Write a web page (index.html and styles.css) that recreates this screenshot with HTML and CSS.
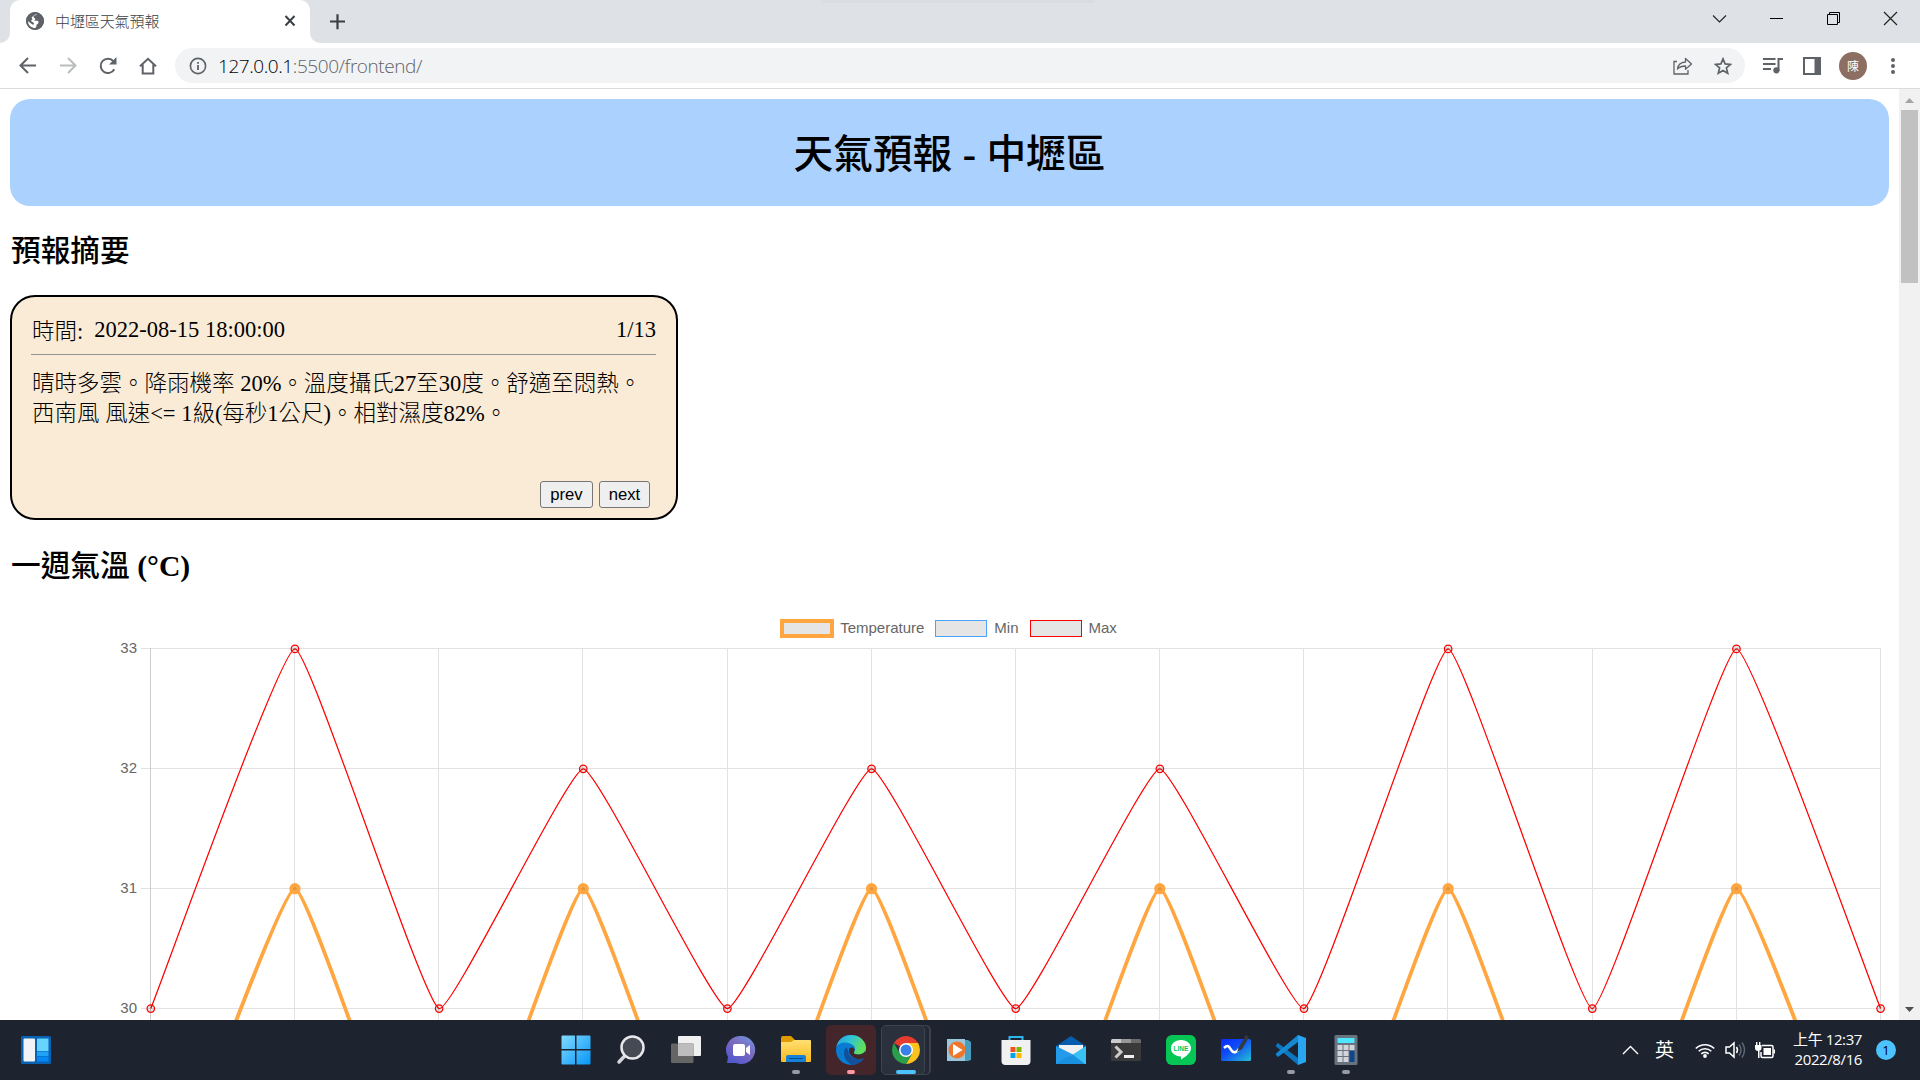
FILE: index.html
```html
<!DOCTYPE html>
<html lang="zh-Hant">
<head>
<meta charset="utf-8">
<title>中壢區天氣預報</title>
<link rel="stylesheet" href="styles.css">
</head>
<body>
<div class="desktop">
  <div class="tabstrip">
    <div class="strip-left"></div>
    <div class="tab">
      <svg class="favicon" width="18" height="18" viewBox="0 0 24 24"><circle cx="12" cy="12" r="12" fill="#5f6368"/><path d="M14.500 2.500c-1 2.500-4.500 1.500-4.500 4 0 1.500 2.500 1 2.500 3 0 1.800-2.500 2-2.500 2h5c1.500 0 2 2 1.500 3-.8 1.500-2.500 1.500-2.500 3 0 1-.5 2.500-2 4.200C5 21.500 2.200 17 2.300 12l6.200 4.500c2 1 3-1 1.500-2.200L6.500 11.500l2-1.500-1-3 6-4.500z" fill="#fff"/><path d="M15 2.700c4 1.300 6.600 5 6.700 9.300-1.500-.5-3.500.5-4.700-.5-1.500-1.200-3.500-.5-4.500-2 1-1.500.5-2.500 2-3.500z" fill="#5f6368"/><circle cx="12" cy="12" r="10.700" fill="none" stroke="#5f6368" stroke-width="2.400"/></svg>
      <span class="tab-title">中壢區天氣預報</span>
      <svg class="tab-close" width="12" height="12" viewBox="0 0 12 12"><path d="M1.500 1l9 9.500M10.500 1l-9 9.500" stroke="#3c4043" stroke-width="2"/></svg>
    </div>
    <div class="strip-rest">
      <svg class="plus" width="16" height="16" viewBox="0 0 16 16"><path d="M7.500 .2v15M0 7.500h15" stroke="#3c4043" stroke-width="2.200"/></svg>
      <div class="top-shadow"></div>
      <div class="win-buttons">
        <svg width="15" height="15" viewBox="0 0 15 15"><path d="M1 4.500l6.500 6.500L14 4.500" fill="none" stroke="#222" stroke-width="1.100"/></svg>
        <svg width="15" height="15" viewBox="0 0 15 15"><path d="M1 7.500h13" stroke="#000"/></svg>
        <svg width="15" height="15" viewBox="0 0 15 15"><path d="M1.500 3.500h10v10h-10zM3.500 3.500v-2h10v10h-2" fill="none" stroke="#000"/></svg>
        <svg width="15" height="15" viewBox="0 0 15 15"><path d="M1 1l13 13M14 1L1 14" stroke="#222" stroke-width="1.200"/></svg>
      </div>
    </div>
  </div>

  <div class="toolbar">
    <div class="nav">
      <svg width="18" height="18" viewBox="0 0 18 18"><path d="M17 8.500H2M9 1L1.500 8.500 9 16" fill="none" stroke="#5f6368" stroke-width="2"/></svg>
      <svg width="18" height="18" viewBox="0 0 18 18"><path d="M1 8.500h15M9 1L16.500 8.500 9 16" fill="none" stroke="#babcbe" stroke-width="2"/></svg>
      <svg width="18" height="18" viewBox="0 0 18 18"><path d="M15.300 12.200A7.200 7.200 0 1 1 14.500 4.300" fill="none" stroke="#5f6368" stroke-width="2"/><path d="M17.500 0v7.500H10z" fill="#5f6368"/></svg>
      <svg width="18" height="18" viewBox="0 0 18 18"><path d="M1 9.300L9 1.800l8 7.500M3.700 7.500v9h10.600v-9" fill="none" stroke="#5f6368" stroke-width="2"/></svg>
    </div>
    <div class="omnibox">
      <svg width="18" height="18" viewBox="0 0 18 18"><circle cx="9" cy="9" r="7.600" fill="none" stroke="#5f6368" stroke-width="1.600"/><path d="M9 8v5M9 5v1.800" stroke="#5f6368" stroke-width="1.800"/></svg>
      <span class="url">127.0.0.1<span class="path">:5500/frontend/</span></span>
      <svg width="20" height="18" viewBox="0 0 20 18"><path d="M4 4.500H1V17h14v-4" fill="none" stroke="#5f6368" stroke-width="1.300"/><path d="M4.500 12c.5-4.300 3.200-6.700 8-7V1.500l6 5.500-6 5.300V9c-3.500 0-6 .8-8 3z" fill="none" stroke="#5f6368" stroke-width="1.300" stroke-linejoin="round"/></svg>
      <svg width="18" height="18" viewBox="0 0 18 18"><path d="M9 1.900l2.100 5 5.400.5-4.100 3.500 1.300 5.300L9 13.400l-4.700 2.800 1.300-5.300L1.500 7.400l5.400-.5z" fill="none" stroke="#5f6368" stroke-width="1.700"/></svg>
    </div>
    <div class="tools">
      <svg width="20" height="18" viewBox="0 0 20 18"><path d="M0 2h12.500M0 7h12.500M0 12h8" stroke="#5f6368" stroke-width="2"/><path d="M15.500 14V2H20" fill="none" stroke="#5f6368" stroke-width="2"/><circle cx="13.400" cy="13.300" r="3.100" fill="#5f6368"/></svg>
      <svg width="18" height="18" viewBox="0 0 18 18"><path d="M1 1h16v16H1z" fill="none" stroke="#5f6368" stroke-width="2"/><path d="M11.500 1H17v16h-5.500z" fill="#5f6368"/></svg>
      <span class="avatar">陳</span>
      <svg width="4" height="18" viewBox="0 0 4 18"><circle cx="2" cy="3" r="2" fill="#5f6368"/><circle cx="2" cy="9" r="2" fill="#5f6368"/><circle cx="2" cy="15" r="2" fill="#5f6368"/></svg>
    </div>
  </div>

  <div class="viewport">
    <main class="page">
      <header class="banner"><h1>天氣預報 <b>-</b> 中壢區</h1></header>
      <h2 class="summary-title">預報摘要</h2>
      <section class="card">
        <div class="card-head"><span class="label">時間:</span><span>2022-08-15 18:00:00</span><span class="count">1/13</span></div>
        <p class="desc">晴時多雲。降雨機率 20%。溫度攝氏27至30度。舒適至悶熱。<br>西南風 風速&lt;= 1級(每秒1公尺)。相對濕度82%。</p>
        <div class="pager"><button>prev</button><button>next</button></div>
      </section>
      <h2 class="week-title">一週氣溫 <b>(°C)</b></h2>
      <div class="legend">
        <span class="item"><i class="box temp"></i>Temperature</span>
        <span class="item"><i class="box min"></i>Min</span>
        <span class="item"><i class="box max"></i>Max</span>
      </div>
      <svg class="chart" id="chart" width="1899" height="384" viewBox="0 636 1899 384"></svg>
    </main>
    <div class="scrollbar">
      <svg width="19" height="21" viewBox="0 0 19 21"><path d="M5 14l4.500-5 4.500 5z" fill="#a3a3a3"/></svg>
      <div class="thumb"></div>
      <svg class="down" width="19" height="21" viewBox="0 0 19 21"><path d="M5 8h9l-4.500 5z" fill="#505050"/></svg>
    </div>
  </div>

  <footer class="taskbar">
    <svg class="widgets" width="30" height="28" viewBox="0 0 30 28"><rect width="30" height="28" rx="1.500" fill="#0a62b4"/><rect x="2.500" y="2.500" width="11.500" height="23" rx="1" fill="#f2f3f5"/><path d="M16 2.500h11.500V15H16z" fill="#66d4fc"/><path d="M16 15.500h11.500v4.500H16z" fill="#1fa3f5"/><path d="M16 20.500h11.500v5H16z" fill="#0787f2"/></svg>
    <div class="apps">
      <div class="app"><svg width="30" height="30" viewBox="0 0 30 30"><defs><linearGradient id="win" gradientUnits="userSpaceOnUse" x2="30" y2="30"><stop stop-color="#84dcff"/><stop offset="1" stop-color="#0494f6"/></linearGradient></defs><path d="M.5 1.500q0-1 1-1H14V14H.5zM15.500.5h13q1 0 1 1V14h-14zM.5 15.500H14v14H1.500q-1 0-1-1zM15.500 15.500h14v13q0 1-1 1h-13z" fill="url(#win)"/></svg></div>
      <div class="app"><svg width="30" height="30" viewBox="0 0 30 30"><path d="M10.500 19L3 27" stroke="#d4d6d8" stroke-width="3.500" stroke-linecap="round"/><circle cx="16.500" cy="12.500" r="11" fill="#454b54" stroke="#e8e9ea" stroke-width="2.500"/></svg></div>
      <div class="app"><svg width="30" height="30" viewBox="0 0 30 30"><rect x="7" y="1" width="23" height="20" rx="1" fill="#f0f0f0"/><rect y="8.500" width="22.500" height="19.500" rx="1" fill="#656565"/><path d="M7 8.500h15.500V21H7z" fill="#bdbdbd"/></svg></div>
      <div class="app"><svg width="30" height="30" viewBox="0 0 30 30"><defs><linearGradient id="chat" x1="1" x2=".3" y2="1"><stop stop-color="#6f9be8"/><stop offset=".5" stop-color="#7d69bd"/><stop offset="1" stop-color="#5258cf"/></linearGradient></defs><path d="M15 1a14 14 0 1 1-5 27H1l1-6A14 14 0 0 1 15 1z" fill="url(#chat)"/><rect x="7" y="9" width="12" height="12" rx="2" fill="#fff"/><path d="M20 13l4-3v10l-4-3z" fill="#fff"/></svg></div>
      <div class="app run"><svg width="30" height="30" viewBox="0 0 30 30"><defs><linearGradient id="fold" x2="0" y2="1"><stop stop-color="#ffdf72"/><stop offset="1" stop-color="#fdba1c"/></linearGradient></defs><path d="M0 3q0-2 2-2h8l4 4-3 3H0z" fill="#e09b00"/><path d="M0 7h10l3-2h16q1 0 1 1v20q0 1-1 1H1q-1 0-1-1z" fill="url(#fold)"/><path d="M5 27v-5q0-2 2-2h16q2 0 2 2v5z" fill="#1681d7"/><path d="M8 23.500h14" stroke="#075092"/></svg></div>
      <div class="app run edge"><svg width="30" height="30" viewBox="0 0 30 30"><defs><linearGradient id="eg" x2="1" y2=".4"><stop stop-color="#259fe2"/><stop offset=".5" stop-color="#31c4d5"/><stop offset="1" stop-color="#61df58"/></linearGradient></defs><circle cx="15" cy="15" r="15" fill="#087bd2"/><path d="M10 12c-4 6-2 14 6 18 5 0 10-3 12.500-7C23 26 12 24 12 15z" fill="#12509a"/><path d="M.3 12C2 4 8 0 15 0c9 0 15 6.500 15 12.500 0 4.500-3.500 7-7.500 7-3.500 0-5.500-1.200-4.500-2.500 2.500-3.500.5-7-4-8.500C8 6.500 2.500 8 .3 12z" fill="url(#eg)"/><path d="M18 17c-1 1.500 1 2.500 4.500 2.500 3 0 5.500-1.300 6.700-3.500L30 19l-1.500 4c-3 1.500-8 1.500-11-.5-4-2.500-5.500-6-4-9 2-2.500 6.500-.5 4.500 3.500z" fill="#442529"/></svg></div>
      <div class="app run chrome"><svg width="28" height="28" viewBox="0 0 28 28"><path d="M14 14L1.900 7A14 14 0 0 1 26.100 7z" fill="#e63c30"/><path d="M14 14V7h12.100A14 14 0 0 1 14 28l6-10z" fill="#fcc31e"/><path d="M1.900 7l6 10.500L14 21l6-3.500L14 28A14 14 0 0 1 1.900 7z" fill="#299e4b"/><circle cx="14" cy="14" r="7" fill="#fff"/><circle cx="14" cy="14" r="5.500" fill="#3880ea"/></svg></div>
      <div class="app player"><svg width="28" height="28" viewBox="0 0 28 28"><path d="M5 4h18l3 2v18l-3 1H5z" fill="#4b9bbd"/><path d="M2 3h18v22H2z" fill="#9ac7dc"/><circle cx="12" cy="14" r="8.500" fill="#f1762c"/><path d="M8 8l9.500 6L8 20z" fill="#fff"/></svg></div>
      <div class="app"><svg width="30" height="30" viewBox="0 0 30 30"><path d="M8.500 6V2h13v4" fill="none" stroke="#2fb7ed" stroke-width="2"/><path d="M.5 5h29v21q0 4-4 4h-21q-4 0-4-4z" fill="#f1f1f1"/><path d="M9.500 12h5v5h-5z" fill="#f25022"/><path d="M15.500 12h5v5h-5z" fill="#7fba00"/><path d="M9.500 18h5v5h-5z" fill="#00a4ef"/><path d="M15.500 18h5v5h-5z" fill="#ffb900"/></svg></div>
      <div class="app"><svg width="30" height="30" viewBox="0 0 30 30"><path d="M0 11L15 1l15 10v10H0z" fill="#075cad"/><path d="M3 10h24v8l-12 6-12-6z" fill="#f1f1f1"/><path d="M0 11l16 8-14 10H0z" fill="#249bea"/><path d="M30 11L2 29h28z" fill="#3bc0f4"/><path d="M0 29h29L16 19z" fill="#1a91df"/></svg></div>
      <div class="app"><svg width="30" height="30" viewBox="0 0 30 30"><rect y="4" width="30" height="22" rx="1.500" fill="#3a3a3a"/><path d="M0 8V5.500Q0 4 1.500 4H10v4z" fill="#ccc"/><path d="M10 4h10v4H10z" fill="#999"/><path d="M20 4h8.500Q30 4 30 5.500V8H20z" fill="#6b6b6b"/><path d="M4.500 11.500l5.500 5.500-5.500 5.500" fill="none" stroke="#ccc" stroke-width="3"/><path d="M13 20h10v3H13z" fill="#efefef"/></svg></div>
      <div class="app"><svg width="30" height="30" viewBox="0 0 30 30"><rect width="30" height="30" rx="6" fill="#06c755"/><path d="M15 5c6 0 10 3.800 10 8.300 0 5-6 8.700-10 11.200v-3C9 21.500 5 18 5 13.300 5 8.800 9 5 15 5z" fill="#fff"/><text class="line-text" x="15" y="16" text-anchor="middle">LINE</text></svg></div>
      <div class="app"><svg width="30" height="30" viewBox="0 0 30 30"><defs><linearGradient id="wb" x2="1" y2="1"><stop stop-color="#092aff"/><stop offset=".4" stop-color="#0f4af5"/><stop offset="1" stop-color="#24bed5"/></linearGradient></defs><rect y="4" width="30" height="22" rx="1.500" fill="url(#wb)"/><path d="M3 13c5-5 6 1 8 3s4 2 7-2" fill="none" stroke="#fff" stroke-width="2.500"/><path d="M18 12L25 0l3 2-7 12-5 3z" fill="#363840"/></svg></div>
      <div class="app run"><svg width="30" height="30" viewBox="0 0 30 30"><path d="M0 10l2-2 20 15v7L0 11.500z" fill="#0c75bb"/><path d="M0 20l2 2L22 7V0L0 18.500z" fill="#1588d2"/><path d="M22 0l8 3v24l-8 3z" fill="#29a5f2"/></svg></div>
      <div class="app run"><svg width="30" height="30" viewBox="0 0 30 30"><rect x="3.500" width="23" height="30" rx="1.500" fill="#68737e"/><path d="M6.500 3h17v5h-17z" fill="#4de5ff"/><path d="M6.500 10h5v5h-5zM12.500 10h5v5h-5zM18.500 10h5v5h-5zM6.500 16h5v5h-5zM12.500 16h5v5h-5zM6.500 22h5v5h-5zM12.500 22h5v5h-5z" fill="#d1d5da"/><path d="M18.500 16h5v11h-5z" fill="#11458a"/></svg></div>
    </div>
    <div class="tray">
      <svg width="17" height="10" viewBox="0 0 17 10"><path d="M1 9l7.500-7.500L16 9" fill="none" stroke="#fff" stroke-width="1.400"/></svg>
      <span class="ime">英</span>
      <svg class="wifi" width="20" height="15" viewBox="0 0 20 15"><path d="M.8 5.500a13 13 0 0 1 18.400 0M3.700 8.300a9 9 0 0 1 12.600 0M6.300 10.900a5.300 5.300 0 0 1 7.400 0" fill="none" stroke="#fff" stroke-width="1.600"/><circle cx="10" cy="13" r="1.900" fill="#fff"/></svg>
      <svg class="vol" width="21" height="18" viewBox="0 0 21 18"><path d="M1 6h3.500L9 2v14l-4.500-4H1z" fill="none" stroke="#fff" stroke-width="1.500"/><path d="M11.500 6q2 3 0 6" fill="none" stroke="#fff" stroke-width="1.500"/><path d="M14 3.500q4 5.500 0 11M17 1.500q5 7.500 0 15" fill="none" stroke="#626977" stroke-width="1.400"/></svg>
      <svg class="bat" width="21" height="17" viewBox="0 0 21 17"><path d="M7 3.500h9.500Q18 3.500 18 5v9q0 1.500-1.500 1.500h-9Q6 15.500 6 14v-4" fill="none" stroke="#fff" stroke-width="1.500"/><path d="M8.500 6H16v7H8.500zM18.500 7.500H20v4h-1.500zM0 3h6.500v3q0 3-3.200 3Q0 9 0 6zM1 0h1.400v3H1zM4 0h1.400v3H4zM3 8h1.500v8H3z" fill="#fff"/></svg>
      <div class="clock"><div>上午 12:37</div><div>2022/8/16</div></div>
      <span class="notice">1</span>
    </div>
  </footer>
</div>
<script src="chart.js"></script>
</body>
</html>
```
FILE: chart.js
```js
const svg = document.getElementById('chart');
const left = 150.8, step = 144.15, top33 = 648.9, unit = 119.9;
const x = i => left + i * step;
const y = v => top33 + (33 - v) * unit;
let out = '';

// Grid and y-axis labels
for (let v = 33; v >= 30; v--) {
  const gy = Math.floor(y(v)) + 0.5;
  out += `<path class="grid" d="M141 ${gy}H1881"/>`;
  out += `<text class="tick" x="137" y="${gy + 4}" text-anchor="end">${v}</text>`;
}
for (let i = 0; i < 13; i++) {
  out += `<path class="${i ? 'grid' : 'axis'}" d="M${Math.floor(x(i) - 0.3) + 0.5} 648V1020"/>`;
}

// Smooth line through the points, tension 0.1
function curve(values) {
  const p = values.map((v, i) => [x(i), y(v)]);
  const t = 0.1;
  const cps = p.map((c, i) => {
    const a = p[i - 1] || c, b = p[i + 1] || c;
    const d1 = Math.hypot(c[0] - a[0], c[1] - a[1]);
    const d2 = Math.hypot(b[0] - c[0], b[1] - c[1]);
    const fa = t * d1 / (d1 + d2), fb = t * d2 / (d1 + d2);
    const dx = b[0] - a[0], dy = b[1] - a[1];
    return [c[0] - fa * dx, c[1] - fa * dy, c[0] + fb * dx, c[1] + fb * dy];
  });
  let d = `M${p[0]}`;
  for (let i = 1; i < p.length; i++) {
    d += `C${cps[i - 1][2]},${cps[i - 1][3]} ${cps[i][0]},${cps[i][1]} ${p[i]}`;
  }
  return d;
}

const series = [
  ['max', [30, 33, 30, 32, 30, 32, 30, 32, 30, 33, 30, 33, 30]],
  ['temp', [28, 31, 28, 31, 28, 31, 28, 31, 28, 31, 28, 31, 28]]
];
for (const [name, values] of series) {
  out += `<path class="line ${name}" d="${curve(values)}"/>`;
  values.forEach((v, i) => {
    if (v >= 30) out += `<circle class="dot ${name}" cx="${x(i)}" cy="${y(v)}" r="3.75"/>`;
  });
}
svg.innerHTML = out;
```
FILE: styles.css
```css
* { box-sizing: border-box; }
body { margin: 0; background: #fff; overflow: hidden; }
svg { display: block; flex: none; }
.desktop { width: 1920px; height: 1080px; display: flex; flex-direction: column; }

.tabstrip { height: 43px; display: flex; background: #fff; flex: none; }
.strip-left { width: 10px; background: #dee1e6; border-bottom-right-radius: 10px; }
.tab { width: 300px; display: flex; align-items: center; padding: 0 14px 1px 16px; background: linear-gradient(#dee1e6 0 0) top / 100% 11px no-repeat; position: relative; z-index: 0; }
.tab::before { content: ""; position: absolute; inset: 0; background: #fff; border-radius: 10px 10px 0 0; z-index: -1; }
.tab-title { font: 300 15px "Noto Sans CJK TC", sans-serif; color: #3c4043; margin-left: 11px; flex: 1; line-height: 42px; letter-spacing: -.1px; }
.strip-rest { flex: 1; display: flex; align-items: center; background: #dee1e6; border-bottom-left-radius: 10px; padding: 0 22px 0 20px; }
.top-shadow { width: 274px; height: 3px; align-self: flex-start; background: #d9dce1; margin-left: 475px; }
.win-buttons { margin-left: auto; display: flex; gap: 42px; align-self: flex-start; padding-top: 11px; }

.toolbar { height: 46px; flex: none; display: flex; align-items: center; border-bottom: 1px solid #dadce0; padding: 0 25px 0 19px; }
.nav { display: flex; gap: 22px; width: 156px; }
.omnibox { width: 1570px; height: 35px; border-radius: 18px; background: #f1f3f4; display: flex; align-items: center; padding: 0 13px 0 14px; gap: 21px; }
.url { flex: 1; font: 19px "Open Sans", sans-serif; font-weight: 300; color: #000; margin-left: -10px; letter-spacing: -.43px; }
.path { color: #5f6368; }
.tools { margin-left: auto; display: flex; align-items: center; }
.tools svg:first-child { margin-right: 20px; }
.avatar { width: 28px; height: 28px; border-radius: 50%; background: #8d6e63; color: #fff; font: 12px/27px "Noto Sans CJK TC", sans-serif; text-align: center; margin: 0 24px 0 18px; }

.viewport { height: 931px; flex: none; display: flex; overflow: hidden; }
.page { width: 1899px; flex: none; padding: 10px; font-family: "Liberation Serif", "Noto Sans CJK TC", serif; color: #000; }
.banner { height: 107px; border-radius: 20px; background: #abd1fe; display: flex; align-items: center; justify-content: center; }
h1, h2 { margin: 0; font-weight: 500; }
h1 { font-size: 39.7px; line-height: 60px; padding-top: 4px; word-spacing: .5px; }
h2 { font-size: 29.7px; line-height: 40px; }
.summary-title { margin-top: 25px; padding-left: 1px; }
.card { margin-top: 24px; width: 668px; height: 225px; border: 2px solid #000; border-radius: 25px; background: #faebd7; padding: 17px 20px 10px 19px; display: flex; flex-direction: column; font-size: 22.5px; font-weight: 300; }
.card-head { display: flex; height: 41px; line-height: 32px; border-bottom: 1px solid #929292; }
.label { margin: 1px 11px 0 1px; line-height: 34px; }
.count { margin-left: auto; }
.desc { margin: 14px 0 0 1px; line-height: 30px; white-space: nowrap; }
.pager { margin-top: auto; display: flex; justify-content: flex-end; gap: 6px; padding-right: 6px; }
.pager button { font: 16.67px "Liberation Sans", Arial, sans-serif; height: 27px; padding: 0; width: 53px; border: 1px solid #767676; border-radius: 3px; background: #efefef; color: #000; }
.pager button + button { width: 51px; }
.week-title { margin-top: 26px; padding-left: 1px; }

.legend { display: flex; justify-content: center; margin-top: 34px; height: 16px; font: 15px/16px "Liberation Sans", Arial, sans-serif; color: #666; gap: 12px; }
.item { display: flex; align-items: center; gap: 8px; }
.box { width: 50px; height: 15px; background: #e5e5e5; outline: 1.25px solid; outline-offset: -.6px; }
.box.temp { outline: 4px solid #ffa640; outline-offset: -2px; }
.box.min { outline-color: #4ba3ff; }
.box.max { outline-color: red; }
.chart { margin-left: -10px; }
.grid { stroke: #e2e2e2; stroke-width: 1; }
.axis { stroke: #ccc; stroke-width: 1; }
.tick { font: 15px "Liberation Sans", Arial, sans-serif; fill: #666; }
.line { fill: none; }
.line.max, .dot.max { stroke: red; stroke-width: 1.25; }
.line.temp, .dot.temp { stroke: #ffa640; stroke-width: 3.75; }
.dot { fill: rgba(0, 0, 0, .1); }
.scrollbar { width: 21px; background: #f1f1f1; display: flex; flex-direction: column; align-items: center; }
.thumb { width: 17px; height: 173px; background: #c1c1c1; }
.down { margin-top: auto; }

.taskbar { height: 60px; flex: none; background: #1e2330; display: grid; grid-template-columns: 540px 840px 1fr; align-items: center; color: #fff; }
.widgets { margin-left: 21px; }
.apps { display: flex; padding-left: 8px; }
.app { width: 55px; height: 60px; display: flex; align-items: center; justify-content: center; position: relative; flex: none; }
.app svg { position: relative; }
.player svg { margin-right: 3px; }
.run::after { content: ""; position: absolute; bottom: 6px; left: 24px; width: 8px; height: 4px; border-radius: 2px; background: #969aa2; }
.edge::before, .chrome::before { content: ""; position: absolute; inset: 5px 2px 5px 3px; border-radius: 5px; background: #442529; }
.chrome::before { background: #2b303d; border: 1px solid #3f4451; left: 3px; right: 8px; box-shadow: 5px 0 0 -1px #242936, 6px 0 0 0 #3b404c; }
.edge::after { background: #ff99a4; }
.chrome::after { left: 18px; width: 20px; background: #4cc2ff; }
.line-text { font: 700 6.5px "Liberation Sans", Arial, sans-serif; fill: #06c755; }
.tray { display: flex; align-items: center; padding: 0 24px 0 242px; }
.ime { font: 19px/28px "Noto Sans CJK TC", sans-serif; margin: -2px 21px 0 16px; }
.vol { margin-left: 10px; }
.bat { margin-left: 9px; }
.clock { margin-left: auto; margin-right: 14px; margin-top: -2px; text-align: right; font: 15px/20px "Open Sans", "Noto Sans CJK TC", sans-serif; letter-spacing: -.4px; }
.notice { width: 20px; height: 20px; border-radius: 50%; background: #4cc2ff; color: #000; font: 13px/20px "Open Sans", sans-serif; text-align: center; }
```
